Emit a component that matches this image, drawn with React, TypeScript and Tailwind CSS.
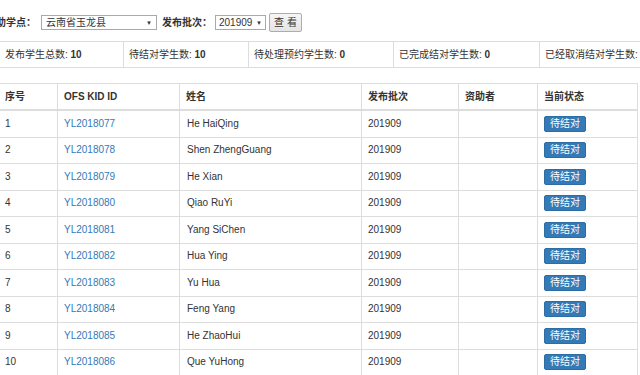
import React from "react";

const rows = [
  ["1", "YL2018077", "He HaiQing"],
  ["2", "YL2018078", "Shen ZhengGuang"],
  ["3", "YL2018079", "He Xian"],
  ["4", "YL2018080", "Qiao RuYi"],
  ["5", "YL2018081", "Yang SiChen"],
  ["6", "YL2018082", "Hua Ying"],
  ["7", "YL2018083", "Yu Hua"],
  ["8", "YL2018084", "Feng Yang"],
  ["9", "YL2018085", "He ZhaoHui"],
  ["10", "YL2018086", "Que YuHong"],
];

const stats: [string, string, string][] = [
  ["发布学生总数:", "10", "w-[124px]"],
  ["待结对学生数:", "10", "w-[125px]"],
  ["待处理预约学生数:", "0", "w-[145px]"],
  ["已完成结对学生数:", "0", "w-[146px]"],
  ["已经取消结对学生数:", "0", "w-[160px]"],
];

export default function App() {
  return (
    <div
      className="w-[640px] h-[375px] overflow-hidden bg-white text-[#333] text-[10px] leading-none"
      style={{ fontFamily: '"Liberation Sans", Arial, "Noto Sans CJK SC", sans-serif' }}
    >
      {/* filter bar */}
      <div className="flex items-center h-[19px] mt-[13px] -ml-[14px] whitespace-nowrap">
        <span className="font-bold">资助学点：</span>
        <div className="ml-[5px] w-[116px] h-[15px] border border-[#a9a9a9] flex items-center justify-between pl-[4px] pr-[4px]">
          <span>云南省玉龙县</span>
          <span className="text-[6px]">▼</span>
        </div>
        <span className="font-bold ml-[5px]">发布批次：</span>
        <div className="ml-[3px] w-[51px] h-[15px] border border-[#a9a9a9] flex items-center justify-between pl-[3px] pr-[3px]">
          <span>201909</span>
          <span className="text-[6px]">▼</span>
        </div>
        <div className="ml-[3px] w-[33px] h-[19px] border border-[#adadad] rounded-[2px] bg-gradient-to-b from-[#f6f6f6] to-[#e4e4e4] flex items-center justify-center">
          查 看
        </div>
      </div>

      {/* stats */}
      <div className="flex mt-[9px] h-[27px] border-t border-b border-[#ddd] whitespace-nowrap">
        {stats.map(([label, v, w], i) => (
          <div key={i} className={`${w} shrink-0 flex items-center pl-[5px] border-r border-[#ddd]`}>
            <span>
              {label}
              {"\u00a0"}
              <b>{v}</b>
            </span>
          </div>
        ))}
      </div>

      {/* table */}
      <div className="mt-[15px] w-[638px]">
        <div className="grid grid-cols-[58px_122px_182px_97px_79px_100px] h-[28px] border-t border-b-2 border-[#ddd] font-bold">
          {["序号", "OFS KID ID", "姓名", "发布批次", "资助者", "当前状态"].map((h, i) => (
            <div key={i} className={`flex items-center ${i === 0 ? "pl-[5px]" : "pl-[6px]"} border-r border-[#ddd]`}>
              {h}
            </div>
          ))}
        </div>
        {rows.map(([n, id, name]) => (
          <div
            key={n}
            className="grid grid-cols-[58px_122px_182px_97px_79px_100px] h-[26.5px] border-b border-[#ddd]"
          >
            <div className="flex items-center pl-[5px] border-r border-[#ddd]">{n}</div>
            <div className="flex items-center pl-[6px] border-r border-[#ddd] text-[#337ab7]">{id}</div>
            <div className="flex items-center pl-[7px] border-r border-[#ddd]">{name}</div>
            <div className="flex items-center pl-[6px] border-r border-[#ddd]">201909</div>
            <div className="flex items-center pl-[6px] border-r border-[#ddd]"></div>
            <div className="flex items-center pl-[6px] border-r border-[#ddd]">
              <span className="w-[42px] h-[16px] rounded-[2px] bg-[#337ab7] border border-[#2e6da4] text-white flex items-center justify-center">
                待结对
              </span>
            </div>
          </div>
        ))}
      </div>
    </div>
  );
}
